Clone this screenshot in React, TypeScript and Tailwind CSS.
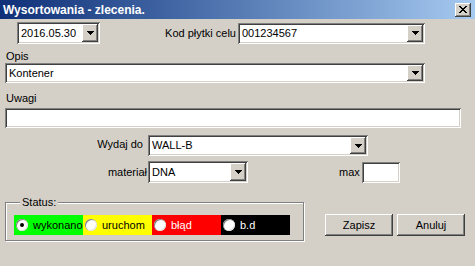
import React from "react";

const sunken =
  "bg-white shadow-[inset_1px_1px_0_#808080,inset_-1px_-1px_0_#ffffff,inset_2px_2px_0_#404040,inset_-2px_-2px_0_#d4d0c8]";
const raised =
  "bg-[#d4d0c8] shadow-[inset_-1px_-1px_0_#404040,inset_1px_1px_0_#ffffff,inset_-2px_-2px_0_#808080,inset_2px_2px_0_#d4d0c8]";

function Arrow() {
  return (
    <svg width="7" height="4" viewBox="0 0 7 4" shapeRendering="crispEdges">
      <rect x="0" y="0" width="7" height="1" fill="#000" />
      <rect x="1" y="1" width="5" height="1" fill="#000" />
      <rect x="2" y="2" width="3" height="1" fill="#000" />
      <rect x="3" y="3" width="1" height="1" fill="#000" />
    </svg>
  );
}

function Combo({ value, className }: { value: string; className: string }) {
  return (
    <div className={`${sunken} ${className} flex items-stretch p-[2px]`}>
      <span className="flex-1 pl-[2px] flex items-center leading-[13px] truncate">{value}</span>
      <span className={`${raised} w-[16px] flex items-center justify-center`}>
        <Arrow />
      </span>
    </div>
  );
}

const statuses = [
  { label: "wykonano", bg: "bg-[#00ff00]", fg: "text-black", checked: true },
  { label: "uruchom", bg: "bg-[#ffff00]", fg: "text-black", checked: false },
  { label: "błąd", bg: "bg-[#ff0000]", fg: "text-white", checked: false },
  { label: "b.d", bg: "bg-black", fg: "text-white", checked: false },
];

export default function App() {
  return (
    <div className="w-[475px] h-[266px] bg-[#d4d0c8] flex flex-col font-['Liberation_Sans',Arial,sans-serif] text-[11px] text-black overflow-hidden">
      {/* title bar */}
      <div className="h-[19px] flex items-center justify-between pl-[3px] pr-[4px] bg-gradient-to-r from-[#0f2f78] to-[#a6caf0]">
        <span className="text-white font-bold text-[12px] leading-[14px]">Wysortowania - zlecenia.</span>
        <span className={`${raised} w-[16px] h-[14px] flex items-center justify-center`}>
          <svg width="8" height="7" viewBox="0 0 8 7" shapeRendering="crispEdges">
            <path d="M0 0h2v1h1v1h2v-1h1v-1h2v1h-1v1h-1v1h-1v1h1v1h1v1h1v1h-2v-1h-1v-1h-2v1h-1v1h-2v-1h1v-1h1v-1h1v-1h-1v-1h-1v-1h-1z" fill="#000" />
          </svg>
        </span>
      </div>

      {/* date + kod */}
      <div className="mt-[3px] h-[22px] flex items-center">
        <Combo value="2016.05.30" className="ml-[17px] w-[83px] h-[22px]" />
        <span className="flex-1 text-right pr-[2px]">Kod płytki celu</span>
        <Combo value="001234567" className="w-[187px] h-[21px] mr-[50px]" />
      </div>

      {/* opis */}
      <div className="h-[19px] pl-[6px] pt-[6px] leading-[13px]">Opis</div>
      <Combo value="Kontener" className="ml-[5px] w-[420px] h-[20px]" />

      {/* uwagi */}
      <div className="h-[25px] pl-[6px] pt-[9px] leading-[13px]">Uwagi</div>
      <div className={`${sunken} ml-[5px] w-[456px] h-[20px]`} />

      {/* wydaj do */}
      <div className="mt-[7px] h-[21px] flex items-center">
        <span className="w-[148px] text-right pr-[5px] -mt-[2px]">Wydaj do</span>
        <Combo value="WALL-B" className="w-[220px] h-[21px]" />
      </div>

      {/* materiał + max */}
      <div className="mt-[5px] h-[22px] flex items-center">
        <span className="w-[148px] text-right pr-[1px]">materiał</span>
        <Combo value="DNA" className="w-[100px] h-[22px]" />
        <span className="ml-[91px] w-[23px]">max</span>
        <div className={`${sunken} w-[38px] h-[21px]`} />
      </div>

      {/* status + buttons */}
      <div className="mt-[13px] flex items-start">
        <fieldset className="ml-[5px] w-[299px] border border-[#808080] shadow-[inset_1px_1px_0_#ffffff,1px_1px_0_#ffffff] pl-[8px] pt-[6px] pb-[5px]">
          <legend className="ml-[6px] px-[2px] bg-[#d4d0c8] leading-[13px]">Status:</legend>
          <div className="flex h-[20px]">
            {statuses.map((s) => (
              <div key={s.label} className={`${s.bg} ${s.fg} w-[69px] flex items-center`}>
                <span className="ml-[2px] w-[12px] h-[12px] rounded-full bg-white shadow-[inset_1px_1px_0_#808080,inset_-1px_-1px_0_#e0e0e0] flex items-center justify-center">
                  {s.checked && <span className="w-[4px] h-[4px] rounded-full bg-black" />}
                </span>
                <span className="ml-[5px] leading-[13px]">{s.label}</span>
              </div>
            ))}
          </div>
        </fieldset>
        <button className={`${raised} ml-[21px] mt-[18px] w-[68px] h-[22px] flex items-center justify-center`}>
          Zapisz
        </button>
        <button className={`${raised} ml-[4px] mt-[18px] w-[68px] h-[22px] flex items-center justify-center`}>
          Anuluj
        </button>
      </div>
    </div>
  );
}
